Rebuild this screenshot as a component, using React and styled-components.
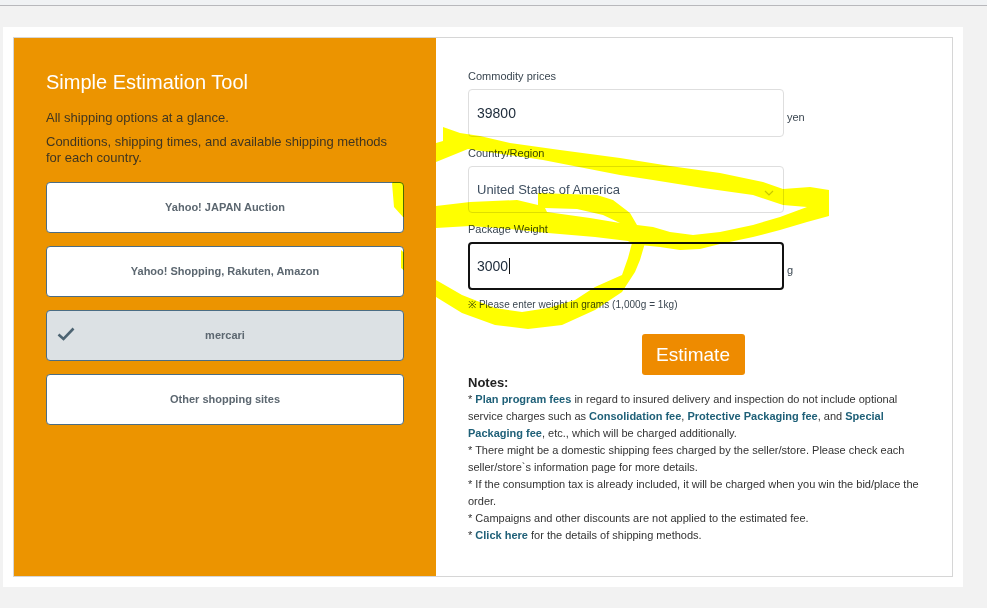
import styled, { createGlobalStyle } from "styled-components";

const GlobalStyle = createGlobalStyle`
    html, body {
        margin: 0;
        padding: 0;
        background: #f2f2f2;
    }
    body {
        font-family: "Liberation Sans", Arial, sans-serif;
    }
`;

const SHOPS = [
    { name: "Yahoo! JAPAN Auction" },
    { name: "Yahoo! Shopping, Rakuten, Amazon" },
    { name: "mercari", selected: true },
    { name: "Other shopping sites" },
];

function App() {
    return (
        <Page>
            <GlobalStyle />
            <TopStrip />
            <Card>
                <Frame>
                    <LeftPanel>
                        <Title>Simple Estimation Tool</Title>
                        <Lead>All shipping options at a glance.</Lead>
                        <Desc>Conditions, shipping times, and available shipping methods for each country.</Desc>
                        <ShopList>
                            {SHOPS.map(shop => (
                                <ShopButton key={shop.name} $selected={shop.selected}>
                                    {shop.selected && (
                                        <CheckIcon viewBox="0 0 18 14">
                                            <path d="M1.5 7.5 L6.5 12 L16.5 1.5" fill="none" stroke="#4d6472" strokeWidth="2.6" />
                                        </CheckIcon>
                                    )}
                                    {shop.name}
                                </ShopButton>
                            ))}
                        </ShopList>
                    </LeftPanel>
                    <RightPanel>
                        <Label>Commodity prices</Label>
                        <FieldRow>
                            <Field>39800</Field>
                            <Unit>yen</Unit>
                        </FieldRow>
                        <Label>Country/Region</Label>
                        <FieldRow>
                            <SelectField>
                                United States of America
                                <Chevron viewBox="0 0 10 6">
                                    <path d="M1 1 L5 5 L9 1" fill="none" stroke="#c8c8c8" strokeWidth="1.2" />
                                </Chevron>
                            </SelectField>
                        </FieldRow>
                        <Label>Package Weight</Label>
                        <FieldRow>
                            <Field $focused>3000<Caret /></Field>
                            <Unit>g</Unit>
                        </FieldRow>
                        <Hint>※ Please enter weight in grams (1,000g = 1kg)</Hint>
                        <ButtonWrap>
                            <EstimateButton>Estimate</EstimateButton>
                        </ButtonWrap>
                        <NotesTitle>Notes:</NotesTitle>
                        <Notes>
                            <div>* <NoteLink>Plan program fees</NoteLink> in regard to insured delivery and inspection do not include optional service charges such as <NoteLink>Consolidation fee</NoteLink>, <NoteLink>Protective Packaging fee</NoteLink>, and <NoteLink>Special Packaging fee</NoteLink>, etc., which will be charged additionally.</div>
                            <div>* There might be a domestic shipping fees charged by the seller/store. Please check each seller/store`s information page for more details.</div>
                            <div>* If the consumption tax is already included, it will be charged when you win the bid/place the order.</div>
                            <div>* Campaigns and other discounts are not applied to the estimated fee.</div>
                            <div>* <NoteLink>Click here</NoteLink> for the details of shipping methods.</div>
                        </Notes>
                    </RightPanel>
                </Frame>
            </Card>
            <Scribble viewBox="0 0 987 608">
                <path
                    fillRule="evenodd"
                    d="M443 127 L460 133 L480 136 L510 143 L560 150 L620 158 L670 166 L720 173 L763 182 L783 189 L810 187 L829 190 L829 216 L807 222 L780 230 L753 237 L720 244 L700 249 L680 250 L660 247 L640 245 L628 241 L595 237 L548 233 L510 229 L470 226 L436 228 L403 217 L394 207 L392 183 L404 170 L436 143 L443 141 Z
                    M436 162 L468 149 L543 160 L620 175 L653 180 L703 188 L753 195 L783 205 L807 207 L780 217 L753 225 L720 232 L693 235 L670 232 L653 227 L637 225 L630 213 L613 200 L597 195 L538 193 L538 205 L517 200 L470 202 L436 206 L420 195 Z
                    M545 208 L577 209 L603 215 L620 223 L590 218 L547 212 Z"
                    fill="#ffff00"
                />
                <path
                    d="M628 241 L645 243 L640 260 L635 272 L622 292 L595 310 L562 325 L528 329 L495 325 L462 313 L436 297 L401 268 L401 250 L436 280 L462 295 L495 308 L522 312 L548 308 L575 300 L595 287 L622 275 L628 258 L632 243 Z"
                    fill="#ffff00"
                />
            </Scribble>
        </Page>
    );
}

export default App;

const Page = styled.div`
    position: relative;
    height: 608px;
    overflow: hidden;
`;

const TopStrip = styled.div`
    height: 5px;
    background: #f0f2f4;
    border-bottom: 1px solid #b8b8bc;
`;

const Card = styled.div`
    width: 960px;
    height: 560px;
    margin: 21px 0 0 3px;
    padding: 10px;
    box-sizing: border-box;
    background: white;
`;

const Frame = styled.div`
    height: 100%;
    display: flex;
    box-sizing: border-box;
    border: 1px solid #d6d6d6;
`;

const LeftPanel = styled.div`
    width: 422px;
    box-sizing: border-box;
    padding: 32px 32px 0;
    background: #ec9400;
`;

const Title = styled.h2`
    margin: 0 0 16px;
    font-size: 20px;
    font-weight: normal;
    line-height: 24px;
    color: white;
`;

const Lead = styled.p`
    margin: 0 0 8px;
    font-size: 13px;
    line-height: 16px;
    color: #3f3520;
`;

const Desc = styled(Lead)`
    margin-bottom: 16px;
`;

const ShopList = styled.div`
    display: flex;
    flex-direction: column;
    gap: 13px;
`;

const ShopButton = styled.div`
    position: relative;
    height: 51px;
    box-sizing: border-box;
    display: flex;
    align-items: center;
    justify-content: center;
    padding-bottom: 2px;
    font-size: 11px;
    font-weight: bold;
    color: #5c6770;
    background: ${props => (props.$selected ? "#dce1e4" : "white")};
    border: 1px solid #4b6d84;
    border-radius: 4px;
`;

const CheckIcon = styled.svg`
    position: absolute;
    left: 10px;
    top: 16px;
    width: 18px;
    height: 14px;
`;

const RightPanel = styled.div`
    flex: 1;
    box-sizing: border-box;
    padding: 32px 32px 0;
    background: white;
`;

const Label = styled.div`
    font-size: 11px;
    line-height: 13px;
    color: #3a4650;
    margin-bottom: 6px;
`;

const FieldRow = styled.div`
    display: flex;
    align-items: flex-end;
    margin-bottom: 10px;
`;

const Field = styled.div`
    width: 316px;
    height: 48px;
    box-sizing: border-box;
    display: flex;
    align-items: center;
    padding-left: ${props => (props.$focused ? "7px" : "8px")};
    font-size: 14px;
    color: #1d2b3a;
    background: white;
    border: ${props => (props.$focused ? "2px solid #111" : "1px solid #dedede")};
    border-radius: 4px;
`;

const SelectField = styled(Field)`
    position: relative;
    height: 47px;
    font-size: 13px;
    color: #3f4f60;
`;

const Chevron = styled.svg`
    position: absolute;
    right: 9px;
    top: 23px;
    width: 10px;
    height: 6px;
`;

const Caret = styled.span`
    width: 1px;
    height: 16px;
    margin-left: 1px;
    background: #111;
`;

const Unit = styled.span`
    margin: 0 0 13px 3px;
    font-size: 11px;
    line-height: 13px;
    color: #3a4650;
`;

const Hint = styled.div`
    margin-top: -1px;
    font-size: 10px;
    line-height: 12px;
    letter-spacing: 0.05px;
    color: #3a4650;
`;

const ButtonWrap = styled.div`
    display: flex;
    justify-content: center;
    width: 450px;
    margin-top: 23px;
`;

const EstimateButton = styled.div`
    width: 103px;
    height: 41px;
    display: flex;
    align-items: center;
    justify-content: center;
    font-size: 19px;
    color: white;
    background: #ee8b00;
    border-radius: 3px;
`;

const NotesTitle = styled.div`
    font-size: 13px;
    font-weight: bold;
    line-height: 15px;
    color: #222;
`;

const Notes = styled.div`
    width: 452px;
    margin-top: 1px;
    font-size: 11px;
    line-height: 17px;
    color: #333;
`;

const NoteLink = styled.span`
    font-weight: bold;
    color: #1f6078;
`;

const Scribble = styled.svg`
    position: absolute;
    left: 0;
    top: 0;
    width: 987px;
    height: 608px;
    mix-blend-mode: multiply;
    pointer-events: none;
`;
